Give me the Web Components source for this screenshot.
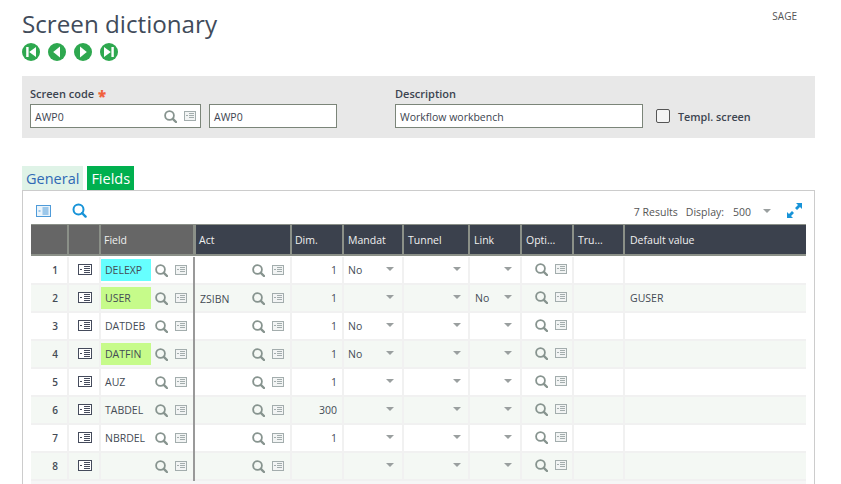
<!DOCTYPE html>
<html>
<head>
<meta charset="utf-8">
<title>Screen dictionary</title>
<style>
  html, body { margin: 0; height: 484px; overflow: hidden; background: #fff; }
  body { font: 11px "Open Sans", sans-serif; color: #3c4450; }
</style>
</head>
<body>
<screen-head heading="Screen dictionary" user="SAGE"></screen-head>

<form-band>
  <form-field slot="a" label="Screen code" required value="AWP0" w="171" tools></form-field>
  <form-field slot="a" label="&nbsp;" value="AWP0" w="128"></form-field>
  <form-field slot="b" label="Description" value="Workflow workbench" w="248"></form-field>
  <check-box slot="b" label="Templ. screen"></check-box>
</form-band>

<tab-bar></tab-bar>
<grid-panel></grid-panel>

<script>
// icons used all over the grid
const lens = (c = '#87948f') => `<svg width="13" height="13" viewBox="0 0 13 13"><circle cx="5.5" cy="5.5" r="4.4" fill="none" stroke="${c}" stroke-width="1.8"/><path d="M8.8 8.8L12 12" stroke="${c}" stroke-width="2.4" stroke-linecap="round"/></svg>`;
const card = () => `<svg width="12" height="10" viewBox="0 0 12 10"><rect x=".5" y=".5" width="11" height="9" fill="#f2f4f4" stroke="#a3adad"/><path d="M2 4.5h2M5 2.5h5M5 4.5h5M5 6.5h5" stroke="#a3adad"/></svg>`;
const bigCard = `<svg width="14" height="11" viewBox="0 0 14 11"><rect x=".5" y=".5" width="13" height="10" fill="#fff" stroke="#454b5c"/><path d="M2 5.5h2M6 2.5h6M6 4.5h6M6 6.5h6M6 8.5h6" stroke="#454b5c"/></svg>`;
const caret = `<svg width="8" height="4" viewBox="0 0 8 4"><path d="M0 0h8L4 4z" fill="#9a9f9f"/></svg>`;

class ScreenHead extends HTMLElement {
  constructor() {
    super();
    this.attachShadow({ mode: 'open' });
    const nav = [
      'M4.2 4h2.4v10H4.2zM14 4v10L7.2 9z',
      'M12 3.5v11L5.2 9z',
      'M6 3.5v11L12.8 9z',
      'M4 4v10l6.8-5zM11.4 4h2.4v10h-2.4z'
    ];
    this.shadowRoot.innerHTML = `
      <style>
        :host { display: flex; justify-content: space-between; padding: 0 44px 0 22px; height: 76px; }
        h1 { margin: 6px 0 0; font: 400 24.2px/36px "Open Sans", sans-serif; color: #414b5a; }
        .nav { display: flex; gap: 8px; margin-top: 1px; }
        .user { font-size: 10px; line-height: 14px; margin-top: 9px; color: #555; }
      </style>
      <div>
        <h1>${this.getAttribute('heading')}</h1>
        <div class="nav">${nav.map(d => `<svg width="18" height="18" viewBox="0 0 18 18"><circle cx="9" cy="9" r="9" fill="#2ea84f"/><path d="${d}" fill="#fff"/></svg>`).join('')}</div>
      </div>
      <div class="user">${this.getAttribute('user')}</div>`;
  }
}

class FormBand extends HTMLElement {
  constructor() {
    super();
    this.attachShadow({ mode: 'open' });
    this.shadowRoot.innerHTML = `
      <style>
        :host { display: flex; gap: 58px; margin: 0 26px 0 22px; height: 62px; padding: 11px 8px 0; box-sizing: border-box; background: #e8e8e8; }
        div { display: flex; gap: 8px; align-items: flex-end; height: 41px; }
        .b { gap: 13px; }
      </style>
      <div><slot name="a"></slot></div>
      <div class="b"><slot name="b"></slot></div>`;
  }
}

class FormField extends HTMLElement {
  constructor() {
    super();
    this.attachShadow({ mode: 'open' });
    const tools = this.hasAttribute('tools') ? `<span class="tools">${lens()}${card()}</span>` : '';
    const star = this.hasAttribute('required') ? ' <b>*</b>' : '';
    this.shadowRoot.innerHTML = `
      <style>
        :host { display: block; width: ${this.getAttribute('w')}px; }
        label { display: block; font-weight: 600; font-size: 11px; line-height: 13px; height: 17px; color: #3c4450; }
        label b { color: #f0603c; font-size: 15px; line-height: 13px; margin-left: 1px; vertical-align: -4px; }
        .box { display: flex; align-items: center; height: 24px; box-sizing: border-box; border: 1px solid #7b8579; background: #fff; padding: 1px 4px 0; font-size: 10.5px; }
        .val { flex: 1; }
        .tools { display: flex; gap: 7px; align-items: center; margin-top: -1px; }
      </style>
      <label>${this.getAttribute('label')}${star}</label>
      <div class="box"><span class="val">${this.getAttribute('value')}</span>${tools}</div>`;
  }
}

class CheckBox extends HTMLElement {
  constructor() {
    super();
    this.attachShadow({ mode: 'open' });
    this.shadowRoot.innerHTML = `
      <style>
        :host { display: flex; align-items: center; gap: 8px; height: 24px; font-weight: 600; font-size: 10.8px; }
        i { width: 12px; height: 12px; border: 1px solid #555; border-radius: 2px; background: #f4f4f4; }
      </style>
      <i></i><span>${this.getAttribute('label')}</span>`;
  }
}

class TabBar extends HTMLElement {
  constructor() {
    super();
    this.attachShadow({ mode: 'open' });
    this.shadowRoot.innerHTML = `
      <style>
        :host { display: flex; gap: 4px; margin: 28px 0 0 22px; height: 24px; font-size: 14.5px; line-height: 25px; }
        span { padding: 0 4px; background: #dff3e7; color: #2f69b5; }
        .on { background: #00b04f; color: #fff; }
      </style>
      <span>General</span><span class="on">Fields</span>`;
  }
}

class GridPanel extends HTMLElement {
  constructor() {
    super();
    this.attachShadow({ mode: 'open' });
    this.shadowRoot.innerHTML = `
      <style>
        :host { display: block; margin: 0 26px 0 22px; height: 294px; box-sizing: border-box; border: 1px solid #ccc; border-bottom: 0; padding: 0 8px; overflow: hidden; }
        .bar { display: flex; align-items: center; height: 33px; box-sizing: border-box; padding-top: 6px; color: #555; font-size: 10.5px; }
        .bar .l { display: flex; gap: 21px; align-items: center; margin-left: 5px; flex: 1; }
        .bar .r { display: flex; align-items: center; }
        .txt { padding-top: 3px; }
        .d { margin-left: 8px; }
        .n { margin-left: 9px; width: 30px; padding-top: 2px; }
        .ex { margin: 0 4px 0 16px; }
      </style>
      <div class="bar">
        <div class="l">
          <svg width="15" height="12" viewBox="0 0 15 12"><rect x=".5" y=".5" width="14" height="11" fill="#eaf4fb" stroke="#4f9bd9"/><path d="M2.5 6h2M6.5 3h6M6.5 5h6M6.5 7h6M6.5 9h6" stroke="#4f9bd9"/></svg>
          <svg width="15" height="15" viewBox="0 0 15 15"><circle cx="6.5" cy="6.5" r="5" fill="none" stroke="#1793d8" stroke-width="2"/><path d="M10 10l3.6 3.6" stroke="#1793d8" stroke-width="2.4" stroke-linecap="round"/></svg>
        </div>
        <div class="r">
          <span class="txt">7 Results</span><span class="txt d">Display:</span><span class="n">500</span>${caret}
          <svg class="ex" width="15" height="15" viewBox="0 0 15 15"><path d="M9 0h6v6l-2-2-3 3-2-2 3-3zM0 15V9l2 2 3-3 2 2-3 3 2 2z" fill="#1793d8"/></svg>
        </div>
      </div>
      <slot></slot>
      <data-grid></data-grid>`;
  }
}

// column starts: 31 67 99 193 290 342 402 468 520 572 623, end 806
const COLS = '36px 32px 94px 97px 52px 60px 66px 52px 52px 51px 183px';
const ROWS = [
  ['DELEXP', '#66ffff', '', '1', 'No', ''],
  ['USER', '#c6fb8a', 'ZSIBN', '1', '', 'No', 'GUSER'],
  ['DATDEB', '', '', '1', 'No', ''],
  ['DATFIN', '#c6fb8a', '', '1', 'No', ''],
  ['AUZ', '', '', '1', '', ''],
  ['TABDEL', '', '', '300', '', ''],
  ['NBRDEL', '', '', '1', '', ''],
  ['', '', '', '', '', '']
];

class DataGrid extends HTMLElement {
  constructor() {
    super();
    this.attachShadow({ mode: 'open' });
    const heads = ['', '', 'Field', 'Act', 'Dim.', 'Mandat', 'Tunnel', 'Link', 'Opti...', 'Tru...', 'Default value'];
    const th = heads.map((h, i) => `<div class="th${i < 3 ? ' grey' : ''}${i ? '' : ' first'}">${h}</div>`).join('');
    const tools = `<span class="tools">${lens()}${card()}</span>`;
    const rows = ROWS.map((r, i) => {
      const [field, colour, act, dim, mand, link, def] = r;
      return `<div class="row${i % 2 ? ' alt' : ''}">
        <div class="td num first">${i + 1}</div>
        <div class="td ic">${bigCard}</div>
        <div class="td fld"><span class="code" style="background:${colour || 'transparent'}">${field}</span>${tools}</div>
        <div class="td sp act"><span class="t">${act}</span>${tools}</div>
        <div class="td dim">${dim}</div>
        <div class="td sp"><span class="t">${mand}</span>${caret}</div>
        <div class="td sp tun"><span></span>${caret}</div>
        <div class="td sp lnk"><span class="t">${link}</span>${caret}</div>
        <div class="td sp opt"><span></span>${tools}</div>
        <div class="td"></div>
        <div class="td def">${def || ''}</div>
      </div>`;
    }).join('');
    this.shadowRoot.innerHTML = `
      <style>
        :host { display: block; font-size: 10.5px; color: #444b55; }
        .head, .row { display: grid; grid-template-columns: ${COLS}; }
        .head { height: 32px; margin-bottom: 1px; }
        .th { background: #3b414d; color: #f0f0f0; border: solid #8b9088; border-width: 1px 0 2px 2px; padding: 0 4px; line-height: 30px; overflow: hidden; white-space: nowrap; }
        .th.grey { background: #666; }
        .th.first { border-left: 0; }
        .th:nth-child(3), .th:nth-child(5) { padding-left: 3px; }
        .th:nth-child(4) { border-left-width: 3px; padding-left: 3px; }
        .th:last-child { padding-left: 5px; }
        .row { height: 28px; background: #f4f8f4; border-bottom: 2px solid #f1f1f1; box-sizing: border-box; }
        .row:not(.alt) { background: #fff; }
        .td { display: flex; align-items: center; box-sizing: border-box; border-left: 2px solid #f1f1f1; padding: 0 4px 2px; white-space: nowrap; }
        .td.first { border-left: 0; }
        .num { justify-content: flex-end; padding: 0 9px 0 0; font-weight: 600; font-size: 10px; }
        .ic { justify-content: center; padding-right: 2px; }
        .fld { padding: 0; }
        .code { height: 22px; line-height: 22px; padding-left: 4px; flex: 0 0 46px; margin-right: 4px; }
        .sp { justify-content: space-between; padding: 0 8px 2px 4px; }
        .t { padding-top: 2px; }
        .act { border-left-color: #999; padding: 0 6px 2px 5px; }
        .row .act { margin-bottom: -2px; }
        .tun { padding-right: 7px; }
        .lnk { padding-left: 5px; }
        .opt { padding-right: 5px; }
        .tools { display: flex; gap: 7px; align-items: center; }
        .dim { justify-content: flex-end; padding: 0 5px 0 0; }
        .def { padding: 0 0 0 5px; }
        .rest { height: 10px; background: #f6f6f6; }
      </style>
      <div class="head">${th}</div>
      ${rows}
      <div class="rest"></div>`;
  }
}

customElements.define('screen-head', ScreenHead);
customElements.define('form-band', FormBand);
customElements.define('form-field', FormField);
customElements.define('check-box', CheckBox);
customElements.define('tab-bar', TabBar);
customElements.define('grid-panel', GridPanel);
customElements.define('data-grid', DataGrid);
</script>
</body>
</html>
